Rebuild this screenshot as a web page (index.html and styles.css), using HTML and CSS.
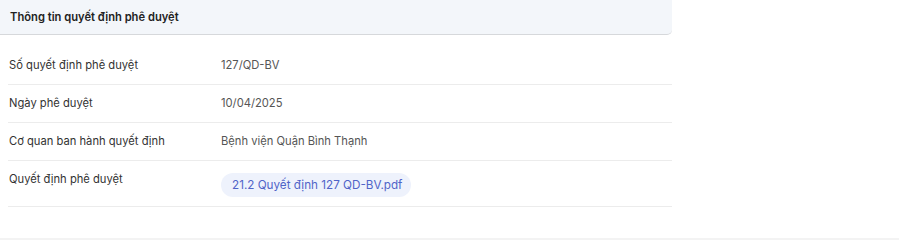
FILE: index.html
```html
<!DOCTYPE html>
<html lang="vi">

<head>
  <meta charset="UTF-8" />
  <meta name="viewport" content="width=device-width, initial-scale=1.0" />
  <title>Thông tin quyết định phê duyệt</title>
  <link rel="stylesheet" href="styles.css">
</head>

<body>
  <section class="panel">
    <header class="panel-head">
      <h2>Thông tin quyết định phê duyệt</h2>
    </header>

    <div class="panel-body">
      <div class="row">
        <span class="label">Số quyết định phê duyệt</span>
        <span class="value">127/QD-BV</span>
      </div>
      <div class="row">
        <span class="label">Ngày phê duyệt</span>
        <span class="value">10/04/2025</span>
      </div>
      <div class="row">
        <span class="label">Cơ quan ban hành quyết định</span>
        <span class="value">Bệnh viện Quận Bình Thạnh</span>
      </div>
      <div class="row row-file">
        <span class="label">Quyết định phê duyệt</span>
        <span class="value"><a class="file" href="#">21.2 Quyết định 127 QD-BV.pdf</a></span>
      </div>
    </div>
  </section>

  <div class="page-foot"></div>
</body>

</html>
```

FILE: styles.css
```css
body {
  margin: 0;
  background-color: #fff;
  font-family: Inter, "Noto Sans", Arial, sans-serif;
  color: #333;
}

.panel {
  width: 672px;
}

.panel-head {
  height: 34px;
  display: flex;
  align-items: center;
  padding: 0 10px;
  background-color: #f3f6fa;
  border-bottom: 1px solid #d6d8db;
  border-bottom-right-radius: 5px;
}

.panel-head h2 {
  margin: 0;
  font-size: 11.2px;
  font-weight: 600;
  color: #222;
}

.panel-body {
  padding: 12px 0 0 8px;
}

.row {
  display: grid;
  grid-template-columns: 212px 1fr;
  align-items: start;
  padding: 12px 1px;
  border-bottom: 1px solid #ececec;
  font-size: 11.2px;
  line-height: 13px;
}

.label {
  color: #333;
}

.value {
  color: #555;
}

.row-file {
  padding-bottom: 9px;
}

.file {
  display: inline-flex;
  align-items: center;
  height: 24px;
  padding: 0 9px 0 11px;
  border-radius: 12px;
  background-color: #eef2fc;
  color: #5064c8;
  font-size: 11.7px;
  text-decoration: none;
}

.page-foot {
  margin-top: 31px;
  height: 3px;
  background-color: #f3f3f3;
}
```
